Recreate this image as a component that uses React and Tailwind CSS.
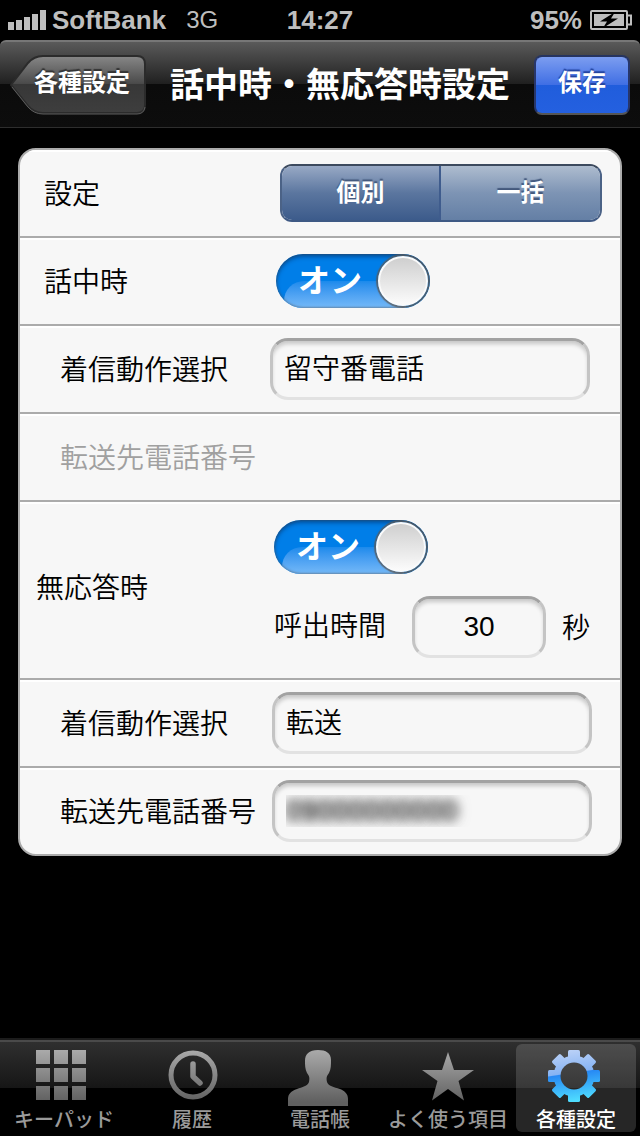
import React, { useState } from "react";

const tabs = [
    { id: "keypad", label: "キーパッド" },
    { id: "history", label: "履歴" },
    { id: "contacts", label: "電話帳" },
    { id: "favorites", label: "よく使う項目" },
    { id: "settings", label: "各種設定" },
];

const GEAR_TEETH = [0, 45, 90, 135, 180, 225, 270, 315];
const GRID = [0, 18, 36];

const TabIcon = ({ name }) => (
    <svg viewBox="0 0 60 60" className="w-[60px] h-[60px] shrink-0 overflow-visible" aria-hidden="true">
        <defs>
            <linearGradient id="tabGray" gradientUnits="userSpaceOnUse" x1="0" y1="4" x2="0" y2="58">
                <stop offset="0" stopColor="#adadad" />
                <stop offset="1" stopColor="#606060" />
            </linearGradient>
            <linearGradient id="tabBlue" gradientUnits="userSpaceOnUse" x1="12" y1="4" x2="20" y2="58">
                <stop offset="0" stopColor="#c3d6f8" />
                <stop offset="0.48" stopColor="#86b3f3" />
                <stop offset="0.5" stopColor="#2789f4" />
                <stop offset="1" stopColor="#4fdcff" />
            </linearGradient>
        </defs>
        {name === "keypad" && (
            <g fill="url(#tabGray)">
                {GRID.map((y) =>
                    GRID.map((x) => <rect key={`${x}-${y}`} x={x + 2} y={y + 6} width="14" height="14" />)
                )}
            </g>
        )}
        {name === "history" && (
            <g fill="none" stroke="url(#tabGray)">
                <circle cx="31" cy="31" r="22" strokeWidth="5" />
                <path d="M31 20 V32.500 L38 39" strokeWidth="5.500" strokeLinecap="round" strokeLinejoin="round" />
            </g>
        )}
        {name === "contacts" && (
            <path
                fill="url(#tabGray)"
                d="M28 6 C19 6 15 10 15 17 C15 21 15 25 17 29 C19 32 20 33 19 38 C18 42 12 43 7 45 C1 47 -2 50 -2 55 V62 H58 V55 C58 50 55 47 50 45 C44 43 38 42 37 38 C36 33 37 32 39 29 C41 25 41 21 41 16 C41 9 36 6 28 6 Z"
            />
        )}
        {name === "favorites" && (
            <path fill="url(#tabGray)" d="M30 8 L36 26 H56 L40.500 37 L46 56.500 L30 45 L14 56.500 L19.500 37 L4 26 H24 Z" />
        )}
        {name === "settings" && (
            <g>
                <mask id="gearHole">
                    <rect width="60" height="60" fill="#fff" />
                    <circle cx="28" cy="32" r="13.500" fill="#000" />
                </mask>
                <mask id="gearShape">
                    <g fill="#fff">
                        <circle cx="28" cy="32" r="20.500" />
                        {GEAR_TEETH.map((a) => (
                            <rect key={a} x="22" y="6" width="12" height="12" rx="1.500" transform={`rotate(${a} 28 32)`} />
                        ))}
                    </g>
                </mask>
                <g mask="url(#gearHole)">
                    <rect width="60" height="60" fill="url(#tabBlue)" mask="url(#gearShape)" />
                </g>
            </g>
        )}
    </svg>
);

const StatusBar = () => (
    <div className="h-10 grid grid-cols-3 items-center px-2 text-[26px] leading-10 font-bold text-[#bebebe]">
        <div className="flex items-center">
            <svg viewBox="0 0 38 20" className="w-[38px] h-5 mr-1.5 fill-current shrink-0" aria-hidden="true">
                <rect x="0" y="12" width="6" height="8" />
                <rect x="8" y="10" width="6" height="10" />
                <rect x="16" y="7" width="6" height="13" />
                <rect x="24" y="4" width="6" height="16" />
                <rect x="32" y="0" width="6" height="20" />
            </svg>
            <span>SoftBank</span>
            <span className="ml-5 text-2xl leading-10 font-medium">3G</span>
        </div>
        <div className="text-center">14:27</div>
        <div className="flex items-center justify-end">
            <span>95%</span>
            <svg viewBox="0 0 42 20" className="w-[42px] h-5 ml-2" aria-hidden="true">
                <rect x="1" y="1" width="36" height="18" rx="1" fill="none" stroke="#bebebe" strokeWidth="2" />
                <path d="M38 5.500 H41 V14.500 H38" fill="none" stroke="#bebebe" strokeWidth="2" />
                <rect x="4" y="4" width="30" height="12" fill="#bebebe" />
                <path d="M25 2 L10 11.500 H17 L13 18 L28 8.500 H21 Z" fill="#000" />
            </svg>
        </div>
    </div>
);

const NavBar = () => (
    <header className="h-[88px] flex items-center px-2.5 rounded-t-md border-t-2 border-t-[#777] border-b border-b-[#2e2e2e] bg-[linear-gradient(#5a5a5a,#1f1f1f_50%,#0b0b0b_50%,#0d0d0d)]">
        <button className="relative w-[136px] h-[60px] pl-2 pb-1 text-2xl font-bold text-white [text-shadow:0_-2px_1px_#333]">
            <svg viewBox="0 0 136 60" className="absolute inset-0 w-full h-full" aria-hidden="true">
                <defs>
                    <linearGradient id="back" x1="0" y1="0" x2="0" y2="1">
                        <stop offset="0" stopColor="#878787" />
                        <stop offset="0.5" stopColor="#484848" />
                        <stop offset="0.5" stopColor="#373737" />
                        <stop offset="1" stopColor="#3e3e3e" />
                    </linearGradient>
                </defs>
                <path
                    d="M1 30 L18 8 Q24 1 33 1 H127 Q135 1 135 9 V50 Q135 58 127 58 H33 Q24 58 18 51 Z"
                    fill="url(#back)"
                    stroke="#2b2b2b"
                    strokeWidth="2"
                />
                <path d="M2 32 L18 52 Q24 59 33 59 H127 Q134 59 135 52" fill="none" stroke="#5c5c5c" strokeWidth="1" />
            </svg>
            <span className="relative">各種設定</span>
        </button>
        <h1 className="flex-1 text-center text-[34px] leading-none font-bold text-white whitespace-nowrap">
            話中時・無応答時設定
        </h1>
        <button className="w-24 h-[60px] pb-1 rounded-lg border-2 border-t-[#26345f] border-x-[#27366b] border-b-[#555] bg-[linear-gradient(#7c9df0,#3f6ee4_50%,#205ddc_50%,#2460e0)] text-2xl font-bold text-white [text-shadow:0_-2px_1px_#2344a0]">
            保存
        </button>
    </header>
);

const Row = ({ className, children }) => (
    <div
        className={`flex items-center min-h-[88px] border-b-2 border-[#ababab] last:border-b-0 last:min-h-[86px] shadow-[inset_0_2px_0_#fff] ${className || ""}`}
    >
        {children}
    </div>
);

const Segment = ({ options, value, onChange }) => (
    <div
        role="radiogroup"
        aria-label="設定"
        className="flex-1 flex h-[58px] ml-2.5 mr-[18px] rounded-xl overflow-hidden border-2 border-t-[#3c4a5e] border-x-[#4b6286] border-b-[#3e5984]"
    >
        {options.map((opt) => (
            <label key={opt} className="flex-1 cursor-pointer">
                <input
                    type="radio"
                    name="mode"
                    className="peer sr-only"
                    checked={value === opt}
                    onChange={() => onChange(opt)}
                />
                <span className="flex h-full items-center justify-center text-2xl leading-none font-bold text-white [text-shadow:0_-2px_1px_#43587c] bg-[linear-gradient(#aebccf,#7d94b4_50%,#647fa5)] peer-checked:bg-[linear-gradient(#98a9c5,#5b769f_50%,#3c5b8b)] peer-checked:border-r-2 peer-checked:border-[#3f5c8d]">
                    {opt}
                </span>
            </label>
        ))}
    </div>
);

const Switch = ({ label, checked, onChange, className }) => (
    <label className={`relative block w-[154px] h-[54px] shrink-0 cursor-pointer ${className}`}>
        <input
            type="checkbox"
            role="switch"
            aria-label={label}
            className="sr-only"
            checked={checked}
            onChange={(e) => onChange(e.target.checked)}
        />
        <span
            className={`relative flex items-center w-full h-full rounded-full overflow-hidden ${checked ? "bg-[#007ee8]" : "bg-[#f0f0f0]"}`}
        >
            {checked && (
                <span className="absolute left-2 right-6 top-[27px] bottom-0 rounded-tl-[20px] bg-linear-to-b from-[#1a8aec] to-[#74b9f8]"></span>
            )}
            <span className="absolute inset-0 rounded-full shadow-[inset_0_3px_4px_rgba(0,40,90,0.5),inset_0_0_2px_1px_rgba(90,100,110,0.5)]"></span>
            <span
                className={`relative text-[32px] leading-none font-bold ${checked ? "pl-[22px] text-white" : "pl-[68px] text-[#7f7f7f]"}`}
            >
                {checked ? "オン" : "オフ"}
            </span>
            <span
                className={`absolute top-0.5 w-[50px] h-[50px] rounded-full bg-linear-to-b from-[#cfcfcf] to-[#fbfbfb] border-2 border-[#fafafa] shadow-[0_0_1px_2px_rgba(90,90,90,0.8)] ${checked ? "right-0.5" : "left-0.5"}`}
            ></span>
        </span>
    </label>
);

const fieldStyle =
    "h-[62px] min-w-0 rounded-[18px] border-3 border-t-[#a2a2a2] border-x-[#c4c4c4] border-b-[#e2e2e2] bg-[#f7f7f7] text-[28px] font-[350] outline-none shadow-[inset_0_4px_4px_-1px_rgba(0,0,0,0.2)]";

const App = () => {
    const [mode, setMode] = useState("個別");
    const [busy, setBusy] = useState(true);
    const [noAnswer, setNoAnswer] = useState(true);
    const [activeTab, setActiveTab] = useState("settings");

    return (
        <div className="min-h-screen flex flex-col bg-black font-['Liberation_Sans','Noto_Sans_CJK_JP',sans-serif]">
            <StatusBar />
            <NavBar />

            <main className="flex-1 px-[18px] py-5">
                <div className="rounded-[18px] overflow-hidden border-2 border-[#ababab] bg-[#f7f7f7] text-[28px] leading-10 font-[350] text-black">
                    <Row>
                        <span className="w-[250px] pl-6 pt-1">設定</span>
                        <Segment options={["個別", "一括"]} value={mode} onChange={setMode} />
                    </Row>
                    <Row>
                        <span className="w-[250px] pl-6 pt-1">話中時</span>
                        <Switch label="話中時" checked={busy} onChange={setBusy} className="ml-1.5" />
                    </Row>
                    <Row>
                        <label htmlFor="busyAction" className="w-[250px] pl-10 pt-1">
                            着信動作選択
                        </label>
                        <input
                            id="busyAction"
                            type="text"
                            defaultValue="留守番電話"
                            className={`${fieldStyle} flex-1 mr-[30px] px-[11px] pb-1`}
                        />
                    </Row>
                    <Row>
                        <span className="pl-10 pt-1 text-[#a0a0a0]">転送先電話番号</span>
                    </Row>
                    <Row className="pt-[18px] pb-5">
                        <span className="w-[252px] pl-4">無応答時</span>
                        <div className="flex-1 flex flex-col gap-[22px] pr-[30px]">
                            <Switch label="無応答時" checked={noAnswer} onChange={setNoAnswer} className="ml-0.5" />
                            <div className="flex items-center justify-between">
                                <label htmlFor="ringTime" className="pl-0.5">
                                    呼出時間
                                </label>
                                <div className="flex items-center gap-4">
                                    <input
                                        id="ringTime"
                                        type="text"
                                        defaultValue="30"
                                        className={`${fieldStyle} w-[134px] text-center`}
                                    />
                                    <span className="pt-1">秒</span>
                                </div>
                            </div>
                        </div>
                    </Row>
                    <Row>
                        <label htmlFor="noAnswerAction" className="w-[252px] pl-10 pt-1">
                            着信動作選択
                        </label>
                        <input
                            id="noAnswerAction"
                            type="text"
                            defaultValue="転送"
                            className={`${fieldStyle} flex-1 mr-7 px-[11px] pb-1`}
                        />
                    </Row>
                    <Row>
                        <label htmlFor="forwardNumber" className="w-[252px] pl-10 pt-1">
                            転送先電話番号
                        </label>
                        {/* number is masked by a blur */}
                        <input
                            id="forwardNumber"
                            type="tel"
                            defaultValue="09000000000"
                            className={`${fieldStyle} flex-1 mr-7 px-[11px] text-transparent [text-shadow:0_0_10px_#444,0_0_14px_#444]`}
                        />
                    </Row>
                </div>
            </main>

            <nav className="h-[98px] flex border-t-2 border-[#1c1c1c] bg-[linear-gradient(#4a4a4a_2px,#2f2f2f_2px,#161616_50%,#000_50%)]">
                {tabs.map((tab) => (
                    <button
                        key={tab.id}
                        onClick={() => setActiveTab(tab.id)}
                        className={`flex-1 basis-0 min-w-0 my-1 mx-1 flex flex-col items-center rounded-md whitespace-nowrap text-xl leading-6 font-medium ${activeTab === tab.id ? "bg-white/15 text-white" : "text-[#9a9a9a]"}`}
                    >
                        <TabIcon name={tab.id} />
                        <span className="pt-1">{tab.label}</span>
                    </button>
                ))}
            </nav>
        </div>
    );
};

export default App;
